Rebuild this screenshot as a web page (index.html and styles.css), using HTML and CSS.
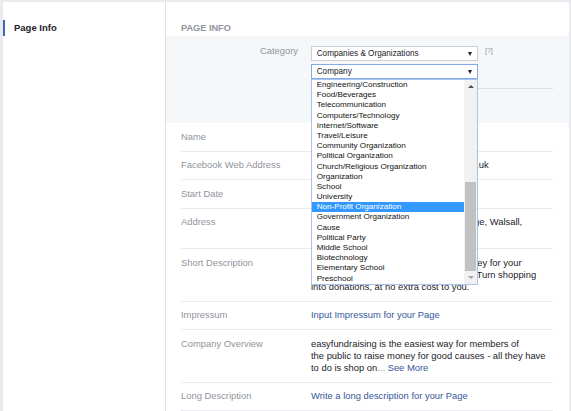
FILE: index.html
```html
<!DOCTYPE html>
<html lang="en">
<head>
<meta charset="utf-8">
<title>Page Info</title>
<link rel="stylesheet" href="styles.css">
</head>
<body>
<div class="page">
  <aside class="sidebar">
    <div class="nav-item">Page Info</div>
  </aside>
  <main class="panel">
    <div class="panel-head">PAGE INFO</div>
    <div class="edit-section">
      <div class="edit-grid">
        <div class="edit-label">Category</div>
        <div class="edit-fields">
          <div class="select-row">
            <div class="select"><span>Companies &amp; Organizations</span><span class="caret"></span></div>
            <span class="help">[?]</span>
          </div>
          <div class="select-row">
            <div class="select focus"><span>Company</span><span class="caret"></span>
              <div class="dropdown">
                <ul class="options">
                  <li class="option">Engineering/Construction</li>
                  <li class="option">Food/Beverages</li>
                  <li class="option">Telecommunication</li>
                  <li class="option">Computers/Technology</li>
                  <li class="option">Internet/Software</li>
                  <li class="option">Travel/Leisure</li>
                  <li class="option">Community Organization</li>
                  <li class="option">Political Organization</li>
                  <li class="option">Church/Religious Organization</li>
                  <li class="option">Organization</li>
                  <li class="option">School</li>
                  <li class="option">University</li>
                  <li class="option selected">Non-Profit Organization</li>
                  <li class="option">Government Organization</li>
                  <li class="option">Cause</li>
                  <li class="option">Political Party</li>
                  <li class="option">Middle School</li>
                  <li class="option">Biotechnology</li>
                  <li class="option">Elementary School</li>
                  <li class="option">Preschool</li>
                </ul>
                <div class="scrollbar">
                  <div class="sb-btn"><span class="arrow-up"></span></div>
                  <div class="sb-track"><div class="sb-thumb"></div></div>
                  <div class="sb-btn"><span class="arrow-down"></span></div>
                </div>
              </div>
            </div>
          </div>
          <div class="edit-divider"></div>
          <div class="edit-actions">
            <span class="btn btn-primary">Save Changes</span>
            <span class="btn">Cancel</span>
          </div>
        </div>
      </div>
    </div>
    <div class="info">
      <div class="info-row">
        <div class="info-label">Name</div>
        <div class="info-value">easyfundraising</div>
      </div>
      <div class="info-row">
        <div class="info-label">Facebook Web Address</div>
        <div class="info-value">www.facebook.com/easyfundraising.org.uk</div>
      </div>
      <div class="info-row">
        <div class="info-label">Start Date</div>
        <div class="info-value">Founded in 2005</div>
      </div>
      <div class="info-row">
        <div class="info-label">Address</div>
        <div class="info-value">Unit 1, Butterfly Court, Leighswood Lodge, Walsall,<br>West Midlands WS9 8UP</div>
      </div>
      <div class="info-row">
        <div class="info-label">Short Description</div>
        <div class="info-value">Join easyfundraising and raise free money for your favourite school, charity or good cause. Turn shopping into donations, at no extra cost to you.</div>
      </div>
      <div class="info-row">
        <div class="info-label">Impressum</div>
        <div class="info-value"><a class="link" href="#">Input Impressum for your Page</a></div>
      </div>
      <div class="info-row">
        <div class="info-label">Company Overview</div>
        <div class="info-value nowrap">easyfundraising is the easiest way for members of<br>the public to raise money for good causes - all they have<br>to do is shop on<span class="muted">...</span> <a class="link" href="#">See More</a></div>
      </div>
      <div class="info-row">
        <div class="info-label">Long Description</div>
        <div class="info-value"><a class="link" href="#">Write a long description for your Page</a></div>
      </div>
    </div>
  </main>
</div>
</body>
</html>
```

FILE: styles.css
```css
* {
  box-sizing: border-box;
}

html,
body {
  margin: 0;
  height: 100%;
  overflow: hidden;
}

body {
  background: #e9ebee;
  font-family: "Liberation Sans", Arial, sans-serif;
  color: #1d2129;
}

.page {
  display: flex;
  min-height: 411px;
  padding: 2px 2px 0 3px;
}

.sidebar {
  flex: none;
  width: 163px;
  background: #fff;
  border-right: 1px solid #dddfe2;
}

.nav-item {
  margin-top: 18px;
  height: 16px;
  line-height: 16px;
  border-left: 2px solid #4267b2;
  padding-left: 9px;
  font-size: 9.5px;
  font-weight: bold;
  color: #1d2129;
}

.panel {
  flex: 1;
  min-width: 0;
  background: #fff;
}

.panel-head {
  height: 34px;
  padding: 20px 15px 0;
  font-size: 9.2px;
  line-height: 12px;
  font-weight: bold;
  color: #90949c;
}

.edit-section {
  height: 87px;
  padding: 10px 16px 0 15px;
  background: #f6f7f9;
}

.edit-grid {
  display: grid;
  grid-template-columns: 130px 1fr;
}

.edit-label {
  margin-top: -1px;
  padding-right: 13px;
  text-align: right;
  font-size: 9.4px;
  line-height: 12px;
  color: #90949c;
}

.select-row {
  display: flex;
  align-items: flex-start;
}

.select {
  position: relative;
  width: 167px;
  height: 15px;
  border: 1px solid #ccd0d5;
  background: #fff;
  padding: 0 5px 0 4.7px;
  display: flex;
  align-items: center;
  justify-content: space-between;
  font-size: 8.2px;
  line-height: 13px;
  color: #1d2129;
}

.select.focus {
  margin-top: 3px;
  border-color: #86a9ea;
}

.caret {
  width: 0;
  height: 0;
  border-left: 2.5px solid transparent;
  border-right: 2.5px solid transparent;
  border-top: 4px solid #1d2129;
}

.help {
  margin-left: 7px;
  font-size: 7px;
  line-height: 9px;
  color: #90949c;
}

.edit-divider {
  margin-top: 9px;
  border-top: 1px solid #dddfe2;
}

.edit-actions {
  display: flex;
  gap: 4px;
  padding-top: 8px;
}

.btn {
  padding: 0 6px;
  height: 18px;
  line-height: 16px;
  border: 1px solid #ccd0d5;
  background: #f6f7f9;
  font-size: 8.2px;
  font-weight: bold;
  color: #4b4f56;
}

.btn-primary {
  background: #4267b2;
  border-color: #4267b2;
  color: #fff;
}

/* open native-style dropdown list */
.dropdown {
  position: absolute;
  left: -1px;
  top: calc(100% + 1px);
  z-index: 5;
  width: 167px;
  display: flex;
  background: #fff;
  border: 1px solid #a9c4ef;
}

.options {
  flex: 1;
  margin: 0;
  padding: 0;
  list-style: none;
  font-size: 8.1px;
}

.option {
  height: 10.2px;
  line-height: 10.2px;
  padding-left: 4.7px;
  white-space: nowrap;
  color: #111;
}

.option.selected {
  background: #3399ff;
  color: #fff;
}

.scrollbar {
  flex: none;
  width: 13px;
  display: flex;
  flex-direction: column;
  background: #f1f1f1;
}

.sb-btn {
  height: 13px;
  display: flex;
  align-items: center;
  justify-content: center;
}

.arrow-up {
  width: 0;
  height: 0;
  border-left: 3px solid transparent;
  border-right: 3px solid transparent;
  border-bottom: 3px solid #505050;
}

.arrow-down {
  width: 0;
  height: 0;
  border-left: 3px solid transparent;
  border-right: 3px solid transparent;
  border-top: 3px solid #a3a3a3;
}

.sb-track {
  flex: 1;
  display: flex;
  flex-direction: column;
  justify-content: flex-end;
  padding: 0 1px;
}

.sb-thumb {
  height: 89px;
  background: #c1c1c1;
}

/* info rows */
.info {
  padding: 0 16px 0 15px;
}

.info-row {
  display: grid;
  grid-template-columns: 130px 1fr;
  padding: 7.75px 0;
  border-bottom: 1px solid #e9ebee;
  font-size: 9.4px;
  line-height: 12px;
}

.info-label {
  color: #90949c;
}

.info-value {
  color: #1d2129;
}

.nowrap {
  white-space: nowrap;
}

.muted {
  color: #90949c;
}

.link {
  color: #365899;
  text-decoration: none;
}
```
